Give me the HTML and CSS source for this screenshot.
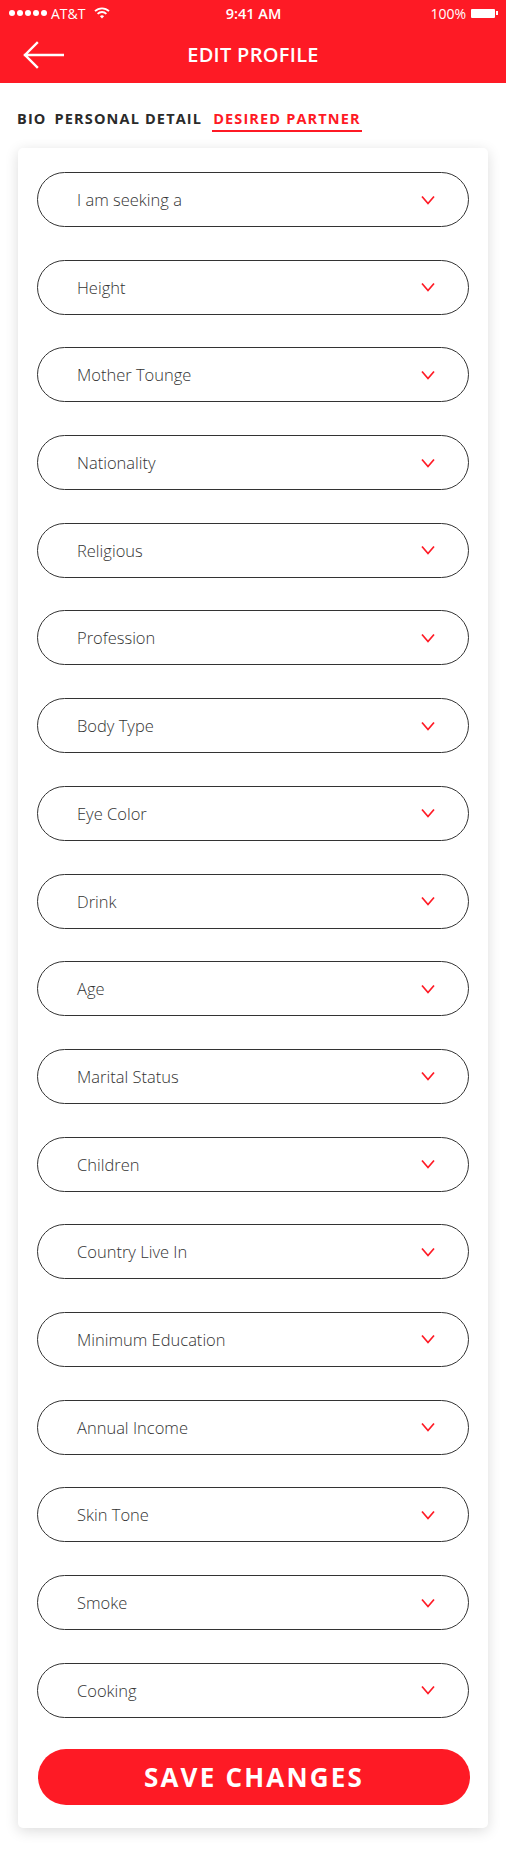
FILE: index.html
```html
<!DOCTYPE html>
<html lang="en">
<head>
<meta charset="utf-8">
<title>Edit Profile</title>
<link rel="stylesheet" href="styles.css">
</head>
<body>
<header class="header">
  <div class="status">
    <div class="status-left">
      <span class="dots"><i></i><i></i><i></i><i></i><i></i></span>
      <span class="carrier">AT&amp;T</span>
      <svg class="wifi" width="16" height="12" viewBox="0 0 16 12"><path d="M1 4.2a10 10 0 0 1 14 0" fill="none" stroke="#fff" stroke-width="1.8"/><path d="M3.6 6.8a6.3 6.3 0 0 1 8.8 0" fill="none" stroke="#fff" stroke-width="1.8"/><path d="M8 11.5 5.9 9.3a3 3 0 0 1 4.2 0z" fill="#fff"/></svg>
    </div>
    <div class="status-time">9:41 AM</div>
    <div class="status-right">
      <span class="pct">100%</span>
      <span class="battery"><span class="battery-body"></span><span class="battery-tip"></span></span>
    </div>
  </div>
  <div class="nav">
    <svg class="back" width="42" height="28" viewBox="0 0 42 28"><path d="M41 14H3M15 2 3 14l12 12" fill="none" stroke="#fff" stroke-width="2.4" stroke-linecap="square"/></svg>
    <h1 class="title">EDIT PROFILE</h1>
  </div>
</header>

<nav class="tabs">
  <span class="tab">BIO</span>
  <span class="tab">PERSONAL DETAIL</span>
  <span class="tab active">DESIRED PARTNER</span>
</nav>

<main class="card">
  <div class="field"><span>I am seeking a</span><svg class="chev" width="14" height="10" viewBox="0 0 14 10"><path d="M1 1.5 7 8.5l6-7" fill="none" stroke="#ff1a25" stroke-width="1.7"/></svg></div>
  <div class="field"><span>Height</span><svg class="chev" width="14" height="10" viewBox="0 0 14 10"><path d="M1 1.5 7 8.5l6-7" fill="none" stroke="#ff1a25" stroke-width="1.7"/></svg></div>
  <div class="field"><span>Mother Tounge</span><svg class="chev" width="14" height="10" viewBox="0 0 14 10"><path d="M1 1.5 7 8.5l6-7" fill="none" stroke="#ff1a25" stroke-width="1.7"/></svg></div>
  <div class="field"><span>Nationality</span><svg class="chev" width="14" height="10" viewBox="0 0 14 10"><path d="M1 1.5 7 8.5l6-7" fill="none" stroke="#ff1a25" stroke-width="1.7"/></svg></div>
  <div class="field"><span>Religious</span><svg class="chev" width="14" height="10" viewBox="0 0 14 10"><path d="M1 1.5 7 8.5l6-7" fill="none" stroke="#ff1a25" stroke-width="1.7"/></svg></div>
  <div class="field"><span>Profession</span><svg class="chev" width="14" height="10" viewBox="0 0 14 10"><path d="M1 1.5 7 8.5l6-7" fill="none" stroke="#ff1a25" stroke-width="1.7"/></svg></div>
  <div class="field"><span>Body Type</span><svg class="chev" width="14" height="10" viewBox="0 0 14 10"><path d="M1 1.5 7 8.5l6-7" fill="none" stroke="#ff1a25" stroke-width="1.7"/></svg></div>
  <div class="field"><span>Eye Color</span><svg class="chev" width="14" height="10" viewBox="0 0 14 10"><path d="M1 1.5 7 8.5l6-7" fill="none" stroke="#ff1a25" stroke-width="1.7"/></svg></div>
  <div class="field"><span>Drink</span><svg class="chev" width="14" height="10" viewBox="0 0 14 10"><path d="M1 1.5 7 8.5l6-7" fill="none" stroke="#ff1a25" stroke-width="1.7"/></svg></div>
  <div class="field"><span>Age</span><svg class="chev" width="14" height="10" viewBox="0 0 14 10"><path d="M1 1.5 7 8.5l6-7" fill="none" stroke="#ff1a25" stroke-width="1.7"/></svg></div>
  <div class="field"><span>Marital Status</span><svg class="chev" width="14" height="10" viewBox="0 0 14 10"><path d="M1 1.5 7 8.5l6-7" fill="none" stroke="#ff1a25" stroke-width="1.7"/></svg></div>
  <div class="field"><span>Children</span><svg class="chev" width="14" height="10" viewBox="0 0 14 10"><path d="M1 1.5 7 8.5l6-7" fill="none" stroke="#ff1a25" stroke-width="1.7"/></svg></div>
  <div class="field"><span>Country Live In</span><svg class="chev" width="14" height="10" viewBox="0 0 14 10"><path d="M1 1.5 7 8.5l6-7" fill="none" stroke="#ff1a25" stroke-width="1.7"/></svg></div>
  <div class="field"><span>Minimum Education</span><svg class="chev" width="14" height="10" viewBox="0 0 14 10"><path d="M1 1.5 7 8.5l6-7" fill="none" stroke="#ff1a25" stroke-width="1.7"/></svg></div>
  <div class="field"><span>Annual Income</span><svg class="chev" width="14" height="10" viewBox="0 0 14 10"><path d="M1 1.5 7 8.5l6-7" fill="none" stroke="#ff1a25" stroke-width="1.7"/></svg></div>
  <div class="field"><span>Skin Tone</span><svg class="chev" width="14" height="10" viewBox="0 0 14 10"><path d="M1 1.5 7 8.5l6-7" fill="none" stroke="#ff1a25" stroke-width="1.7"/></svg></div>
  <div class="field"><span>Smoke</span><svg class="chev" width="14" height="10" viewBox="0 0 14 10"><path d="M1 1.5 7 8.5l6-7" fill="none" stroke="#ff1a25" stroke-width="1.7"/></svg></div>
  <div class="field"><span>Cooking</span><svg class="chev" width="14" height="10" viewBox="0 0 14 10"><path d="M1 1.5 7 8.5l6-7" fill="none" stroke="#ff1a25" stroke-width="1.7"/></svg></div>
  <button class="save">SAVE CHANGES</button>
</main>
</body>
</html>
```
FILE: styles.css
```css
* { box-sizing: border-box; }
html, body { margin: 0; padding: 0; background: #fff; }
body { width: 506px; font-family: "Open Sans", "Liberation Sans", sans-serif; color: #222; }

.header { background: #fe1a25; color: #fff; height: 83px; }
.status { height: 26px; display: flex; align-items: center; justify-content: space-between; padding: 0 8px 0 9px; font-family: "Open Sans", sans-serif; font-size: 14px; }
.status-left { display: flex; align-items: center; width: 160px; }
.dots { display: flex; gap: 2px; }
.dots i { width: 6px; height: 6px; border-radius: 50%; background: #fff; display: block; }
.carrier { margin-left: 4px; font-weight: 400; }
.wifi { margin-left: 9px; }
.status-time { font-weight: 600; font-size: 14.5px; }
.status-right { display: flex; align-items: center; justify-content: flex-end; width: 160px; gap: 5px; }
.battery { display: flex; align-items: center; }
.battery-body { width: 24px; height: 9px; background: #fff; border-radius: 1px; display: block; }
.battery-tip { width: 2px; height: 4px; background: #fff; margin-left: 1px; display: block; }

.nav { height: 57px; display: flex; align-items: center; justify-content: center; position: relative; }
.back { position: absolute; left: 22px; top: 15px; }
.title { margin: 0; font-size: 20px; font-weight: 600; letter-spacing: 0.3px; font-family: "Open Sans", sans-serif; }

.tabs { display: flex; align-items: flex-end; padding: 26px 0 0 17px; gap: 8px; font-weight: 700; font-size: 14.5px; letter-spacing: 1.15px; color: #2a2a2a; }
.tab { line-height: 20px; padding-bottom: 3px; }
.tab.active { color: #fe1a25; border-bottom: 2px solid #fe1a25; padding: 0 1px 1px; margin-left: 2px; }

.card { margin: 16px 18px 29px; background: #fff; border-radius: 5px; box-shadow: 0 3px 14px rgba(0,0,0,0.14); padding: 24px 19px 23px; display: flex; flex-direction: column; gap: 32.7px; }
.field { height: 55px; border: 1.5px solid #333; border-radius: 28px; display: flex; align-items: center; justify-content: space-between; padding: 0 33px 0 39px; font-size: 16.5px; font-weight: 300; color: #333; }
.chev { display: block; }
.save { height: 56px; margin: -1.5px -1px 0 1px; border: 0; border-radius: 28px; background: #fe1a25; color: #fff; font-family: "Open Sans", sans-serif; font-weight: 700; font-size: 26px; letter-spacing: 2.2px; padding: 0; }
```
